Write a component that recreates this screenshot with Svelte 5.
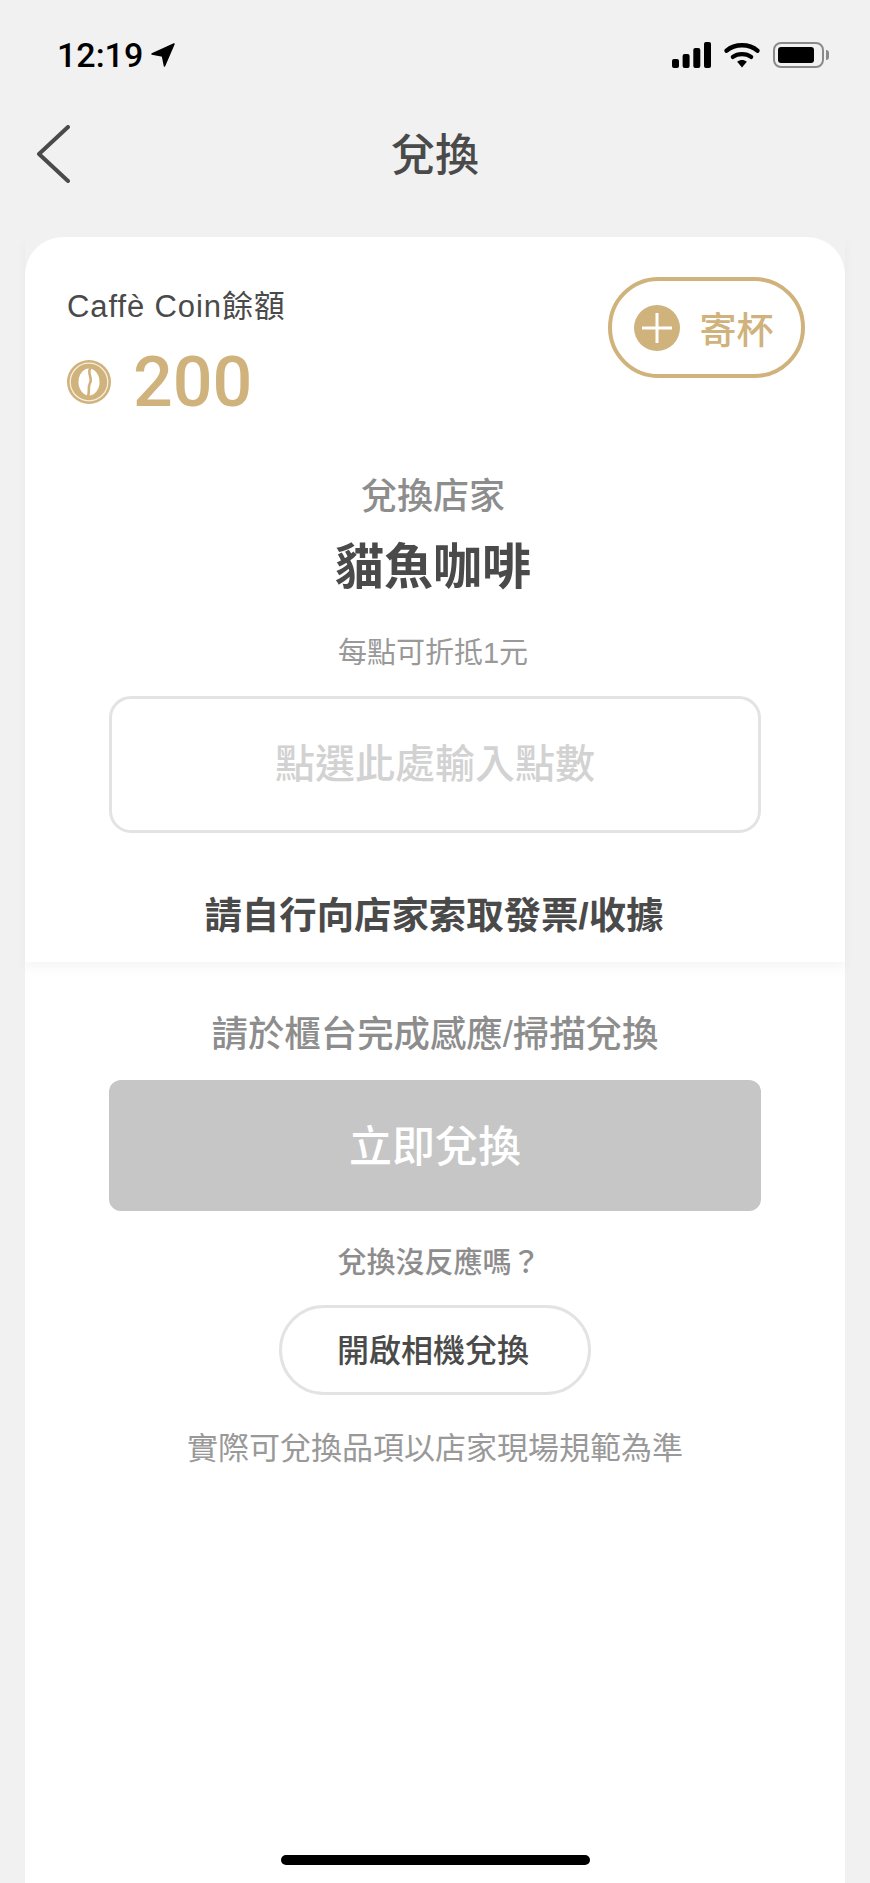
<script lang="ts">
  let points = 200;
  let storeName = "貓魚咖啡";
</script>

<main class="page">
  <div class="status">
    <div class="time">
      <span>12:19</span>
      <svg class="arrow" viewBox="0 0 24 24" width="24" height="24"><path d="M23 1 L1 11 L11.5 13 L13.5 23 Z" fill="#000" stroke="#000" stroke-width="1.5" stroke-linejoin="round" /></svg>
    </div>
    <div class="sys">
      <svg viewBox="0 0 39 26" width="39" height="26">
        <rect x="0" y="17" width="7" height="9" rx="2" />
        <rect x="10.6" y="12" width="7" height="14" rx="2" />
        <rect x="21.3" y="6" width="7" height="20" rx="2" />
        <rect x="32" y="0" width="7" height="26" rx="2" />
      </svg>
      <svg viewBox="0 0 37 27" width="36" height="26">
        <path d="M2.5 9 C11 1.5 26 1.5 34.5 9" fill="none" stroke="#000" stroke-width="4.6" stroke-linecap="round" />
        <path d="M9 15.5 C14 11.5 23 11.5 28 15.5" fill="none" stroke="#000" stroke-width="4.4" stroke-linecap="round" />
        <path d="M13.5 20.5 C16.5 18.2 20.5 18.2 23.5 20.5 L18.5 26.5 Z" />
      </svg>
      <div class="battery"><div class="level"></div></div>
    </div>
  </div>

  <header class="nav">
    <svg class="back" viewBox="0 0 34 58" width="34" height="58"><path d="M32 2 L3 29 L32 56" fill="none" stroke="#4a4a4a" stroke-width="4" stroke-linecap="round" stroke-linejoin="round" /></svg>
    <h1>兌換</h1>
  </header>

  <section class="card">
    <div class="upper">
      <div class="balance-row">
        <div class="balance">
          <div class="label">Caffè Coin餘額</div>
          <div class="amount">
            <svg viewBox="0 0 44 44" width="44" height="44">
              <circle cx="22" cy="22" r="22" fill="#d0b27c" />
              <circle cx="22" cy="22" r="18.8" fill="none" stroke="#f6eedf" stroke-width="1.3" />
              <ellipse cx="22" cy="22" rx="10.5" ry="13.5" fill="#fff" />
              <path d="M23.5 8 C19.5 13 26 17.5 23 23 C20.5 27.5 23 32 21 36" fill="none" stroke="#d0b27c" stroke-width="2.6" />
            </svg>
            <span>{points}</span>
          </div>
        </div>
        <button class="deposit">
          <span class="plus">
            <svg viewBox="0 0 46 46" width="46" height="46">
              <circle cx="23" cy="23" r="23" fill="#d0b27c" />
              <path d="M8 23 H38 M23 8 V38" stroke="#fff" stroke-width="3" />
            </svg>
          </span>
          <span>寄杯</span>
        </button>
      </div>

      <div class="store-label">兌換店家</div>
      <div class="store-name">{storeName}</div>
      <div class="rate">每點可折抵1元</div>
      <div class="point-input">點選此處輸入點數</div>
      <div class="receipt">請自行向店家索取發票/收據</div>
    </div>

    <div class="lower">
      <div class="hint">請於櫃台完成感應/掃描兌換</div>
      <button class="redeem">立即兌換</button>
      <div class="no-response">兌換沒反應嗎？</div>
      <button class="camera">開啟相機兌換</button>
      <div class="note">實際可兌換品項以店家現場規範為準</div>
    </div>
  </section>

  <div class="home"></div>
</main>

<style>
  :global(body) {
    margin: 0;
    background: #f1f1f1;
  }

  .page {
    position: relative;
    height: 1883px;
    overflow: hidden;
    display: flex;
    flex-direction: column;
    background: #f1f1f1;
    font-family: "Liberation Sans", "Noto Sans CJK TC", sans-serif;
    color: #4a4a4a;
  }

  .status {
    height: 41px;
    padding: 34px 41px 0 57px;
    display: flex;
    justify-content: space-between;
    align-items: center;
  }

  .time {
    display: flex;
    align-items: center;
    gap: 8px;
    font-family: Roboto, sans-serif;
    font-weight: 500;
    font-size: 34px;
    color: #000;
  }

  .sys {
    display: flex;
    align-items: center;
    gap: 13px;
  }

  .battery {
    position: relative;
    box-sizing: border-box;
    width: 51px;
    height: 26px;
    margin-right: 5px;
    border: 2px solid #8a8a8a;
    border-radius: 8px;
    padding: 3px 8px 3px 3px;
  }

  .battery::after {
    content: "";
    position: absolute;
    right: -7px;
    top: 6px;
    width: 3px;
    height: 10px;
    background: #8a8a8a;
    border-radius: 0 3px 3px 0;
  }

  .level {
    height: 100%;
    background: #000;
    border-radius: 3px;
  }

  .nav {
    height: 162px;
    display: flex;
    align-items: center;
    justify-content: center;
    position: relative;
    padding-bottom: 0;
  }

  .back {
    position: absolute;
    left: 36px;
    top: 50px;
  }

  .nav h1 {
    margin: 0;
    font-size: 44px;
    font-weight: 500;
    line-height: 1;
  }

  .card {
    flex: 1;
    margin: 0 25px;
    background: #fff;
    border-radius: 38px 38px 0 0;
  }

  .upper {
    height: 725px;
    box-sizing: border-box;
    padding: 40px 42px 0;
    text-align: center;
    box-shadow: 0 6px 10px rgba(0, 0, 0, 0.04);
  }

  .balance-row {
    display: flex;
    justify-content: space-between;
    align-items: flex-start;
    text-align: left;
  }

  .label {
    font-size: 31px;
    line-height: 40px;
    margin-top: 10px;
    letter-spacing: 0.9px;
  }

  .amount {
    display: flex;
    align-items: center;
    gap: 22px;
    margin-top: 20px;
    color: #d0b27c;
    font-family: Roboto, sans-serif;
    font-size: 70px;
    font-weight: 500;
    line-height: 70px;
  }

  .deposit {
    box-sizing: border-box;
    width: 197px;
    height: 101px;
    border: 4px solid #d0b27c;
    border-radius: 51px;
    background: #fff;
    color: #d0b27c;
    font: inherit;
    font-size: 37px;
    font-weight: 500;
    display: flex;
    align-items: center;
    justify-content: center;
    gap: 20px;
    padding: 0 6px 0 0;
    margin-right: -2px;
  }

  .plus {
    display: flex;
  }

  .store-label {
    margin-top: 55px;
    font-size: 36px;
    line-height: 50px;
    color: #8d8d8d;
    font-weight: 500;
    margin-right: 4px;
  }

  .store-name {
    margin-top: 10px;
    font-size: 49px;
    line-height: 70px;
    font-weight: 600;
    margin-right: 4px;
  }

  .rate {
    margin-top: 31px;
    font-size: 29px;
    line-height: 40px;
    color: #999;
    margin-right: 4px;
  }

  .point-input {
    box-sizing: border-box;
    width: 652px;
    height: 137px;
    margin: 23px auto 0;
    border: 3px solid #e3e3e3;
    border-radius: 22px;
    display: flex;
    align-items: center;
    justify-content: center;
    padding-bottom: 8px;
    font-size: 40px;
    font-weight: 500;
    color: #d2d2d2;
  }

  .receipt {
    margin-top: 58px;
    font-size: 37.4px;
    line-height: 50px;
    font-weight: 600;
    margin-right: 2px;
  }

  .lower {
    display: flex;
    flex-direction: column;
    align-items: center;
    padding-top: 48px;
  }

  .hint {
    font-size: 36.4px;
    line-height: 50px;
    font-weight: 500;
    color: #8d8d8d;
  }

  .redeem {
    width: 652px;
    height: 131px;
    margin-top: 20px;
    border: 0;
    border-radius: 12px;
    background: #c6c6c6;
    color: #fff;
    font: inherit;
    font-size: 43px;
    font-weight: 500;
    padding-bottom: 6px;
  }

  .no-response {
    margin-top: 32px;
    margin-left: 8px;
    font-size: 29px;
    line-height: 40px;
    font-weight: 500;
    color: #8d8d8d;
  }

  .camera {
    box-sizing: border-box;
    width: 312px;
    height: 90px;
    margin-top: 22px;
    border: 3px solid #e3e3e3;
    border-radius: 45px;
    background: #fff;
    color: #4a4a4a;
    font: inherit;
    font-size: 32px;
    font-weight: 500;
    padding: 0 4px 4px 0;
  }

  .note {
    margin-top: 33px;
    font-size: 31px;
    line-height: 42px;
    color: #999;
  }

  .home {
    position: absolute;
    left: 281px;
    bottom: 18px;
    width: 309px;
    height: 10px;
    border-radius: 5px;
    background: #000;
  }
</style>
